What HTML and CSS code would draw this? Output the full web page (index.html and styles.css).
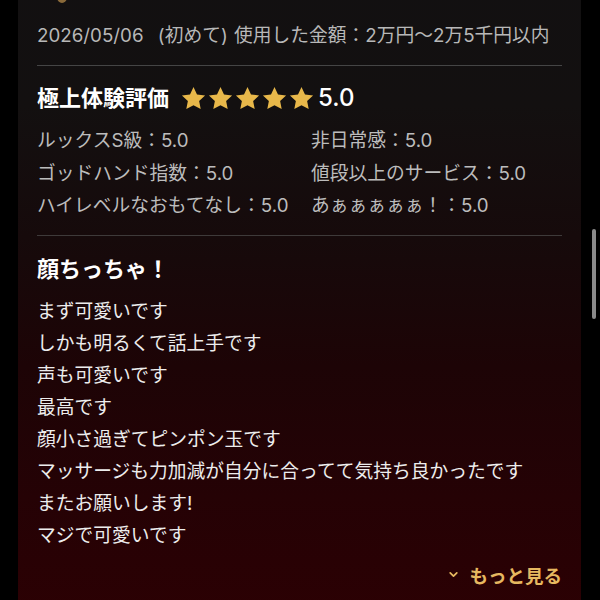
FILE: index.html
```html
<!DOCTYPE html>
<html lang="ja">
<head>
<meta charset="utf-8">
<link rel="stylesheet" href="styles.css">
</head>
<body>
<div class="page">
  <div class="card">
    <div class="top-row"><span class="badge"></span></div>
    <p class="meta"><span>2026/05/06</span> <span class="visit">(初めて)</span> 使用した金額：2万円〜2万5千円以内</p>
    <hr class="divider first">
    <div class="rating-head">
      <h2 class="rating-title">極上体験評価</h2>
      <div class="stars">
        <svg class="star" viewBox="0 0 24 24"><path d="M12 1.8l3.1 6.6 7.2.9-5.3 5 1.4 7.1L12 17.9l-6.4 3.5L7 14.3l-5.3-5 7.2-.9z"/></svg>
        <svg class="star" viewBox="0 0 24 24"><path d="M12 1.8l3.1 6.6 7.2.9-5.3 5 1.4 7.1L12 17.9l-6.4 3.5L7 14.3l-5.3-5 7.2-.9z"/></svg>
        <svg class="star" viewBox="0 0 24 24"><path d="M12 1.8l3.1 6.6 7.2.9-5.3 5 1.4 7.1L12 17.9l-6.4 3.5L7 14.3l-5.3-5 7.2-.9z"/></svg>
        <svg class="star" viewBox="0 0 24 24"><path d="M12 1.8l3.1 6.6 7.2.9-5.3 5 1.4 7.1L12 17.9l-6.4 3.5L7 14.3l-5.3-5 7.2-.9z"/></svg>
        <svg class="star" viewBox="0 0 24 24"><path d="M12 1.8l3.1 6.6 7.2.9-5.3 5 1.4 7.1L12 17.9l-6.4 3.5L7 14.3l-5.3-5 7.2-.9z"/></svg>
      </div>
      <span class="score">5.0</span>
    </div>
    <div class="grid">
      <div>ルックスS級：5.0</div>
      <div>非日常感：5.0</div>
      <div>ゴッドハンド指数：5.0</div>
      <div>値段以上のサービス：5.0</div>
      <div>ハイレベルなおもてなし：5.0</div>
      <div>あぁぁぁぁぁ！：5.0</div>
    </div>
    <hr class="divider second">
    <h3 class="review-title">顔ちっちゃ！</h3>
    <div class="body">
      <p>まず可愛いです</p>
      <p>しかも明るくて話上手です</p>
      <p>声も可愛いです</p>
      <p>最高です</p>
      <p>顔小さ過ぎてピンポン玉です</p>
      <p>マッサージも力加減が自分に合ってて気持ち良かったです</p>
      <p>またお願いします!</p>
      <p>マジで可愛いです</p>
    </div>
    <div class="more"><svg class="chev" viewBox="0 0 10 10"><path d="M2 3.5l3 3 3-3"/></svg><span>もっと見る</span></div>
  </div>
</div>
<div class="scrollbar"></div>
</body>
</html>
```
FILE: styles.css
```css
html, body {
  margin: 0;
  padding: 0;
  background: #000;
  height: 600px;
  overflow: hidden;
}
body {
  font-family: "Inter", "Noto Sans CJK JP", sans-serif;
  position: relative;
}
.page {
  padding-left: 18px;
  display: flex;
}
.card {
  width: 525px;
  margin-top: -24px;
  padding: 0 19px 40px;
  background: linear-gradient(to bottom, #121011 0%, #131010 20%, #160a0b 40%, #1d0406 60%, #250205 80%, #2c0003 100%);
}
.top-row {
  height: 24px;
  position: relative;
}
.badge {
  position: absolute;
  left: 20px;
  top: 15px;
  width: 10px;
  height: 12px;
  border-radius: 50%;
  background: #8a6a3a;
}
.meta {
  margin: 24px 0 0;
  font-size: 18.75px;
  line-height: 24px;
  color: #b8b8b8;
  white-space: nowrap;
}
.visit {
  margin-left: 9px;
  margin-right: 1px;
}
.divider {
  border: none;
  border-top: 1px solid #454545;
  margin: 0;
}
.divider.first { margin-top: 17px; }
.divider.second { margin-top: 12px; border-top-color: #3e3a3a; }
.rating-head {
  display: flex;
  align-items: center;
  margin-top: 18px;
  height: 28px;
}
.rating-title {
  margin: 0;
  font-size: 22px;
  font-weight: bold;
  color: #fff;
  line-height: 28px;
}
.stars {
  display: flex;
  margin-left: 11px;
}
.star {
  width: 27px;
  height: 27px;
  fill: #e8b84a;
}
.score {
  margin-left: 3px;
  font-size: 24px;
  font-weight: 500;
  color: #fff;
  line-height: 28px;
}
.grid {
  margin-top: 13px;
  display: grid;
  grid-template-columns: 274px 1fr;
  font-size: 18.75px;
  line-height: 32.5px;
  color: #bcbcbc;
  white-space: nowrap;
}
.review-title {
  margin: 19px 0 0;
  font-size: 22px;
  font-weight: bold;
  color: #fff;
  line-height: 28px;
}
.body {
  margin-top: 13px;
}
.body p {
  margin: 0;
  font-size: 18.75px;
  line-height: 32px;
  color: #ededed;
  white-space: nowrap;
}
.more {
  margin-top: 11px;
  display: flex;
  justify-content: flex-end;
  align-items: center;
  gap: 10px;
  height: 24px;
  font-size: 18.5px;
  font-weight: bold;
  color: #e6b860;
}
.chev {
  width: 11px;
  height: 11px;
  fill: none;
  stroke: #e6b860;
  stroke-width: 1.6;
  stroke-linecap: round;
  stroke-linejoin: round;
}
.scrollbar {
  position: absolute;
  left: 592px;
  top: 229px;
  width: 4px;
  height: 90px;
  border-radius: 2px;
  background: #8a8a8a;
}
```
